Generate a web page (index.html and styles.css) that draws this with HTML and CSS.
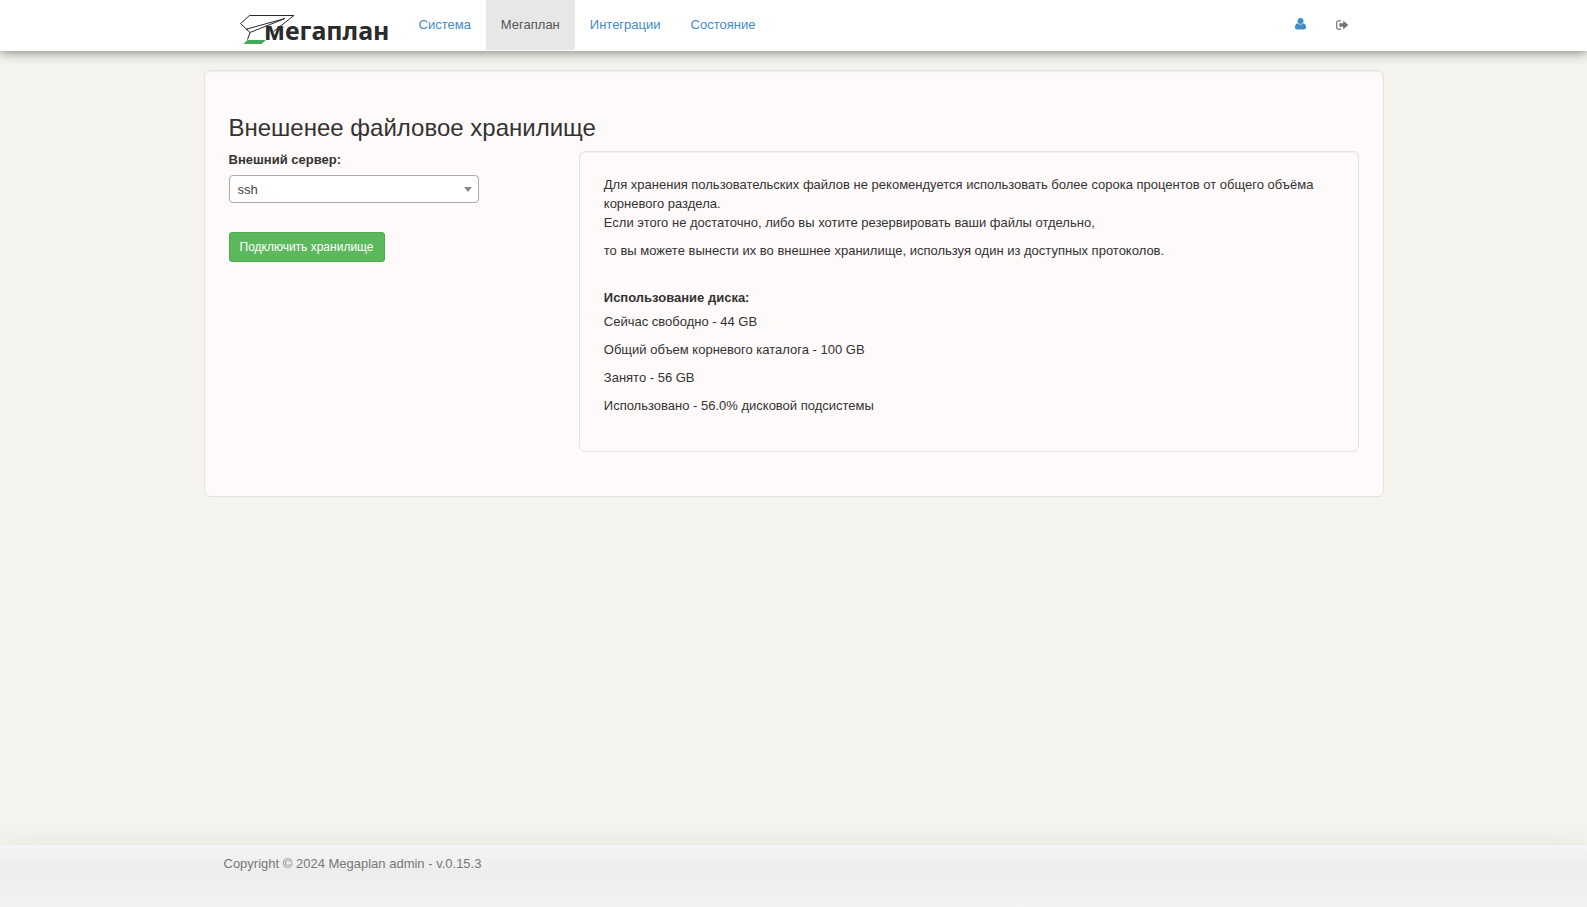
FILE: index.html
```html
<!DOCTYPE html>
<html lang="ru">
<head>
<meta charset="utf-8">
<title>Мегаплан</title>
<link rel="stylesheet" href="styles.css">
</head>
<body>
<header class="navbar">
  <div class="container navbar-inner">
    <a class="brand" href="#" aria-label="Мегаплан">
      <svg class="brand-logo" width="152" height="34" viewBox="0 0 152 34">
        <path d="M8.500 28H27l-4.500 4H4.500z" fill="#3faa58"/>
        <path d="M10.500 3.500H55L34.500 19.500M10.500 3.500L1.500 11.500 11 20.500 8.500 27.500M8 17L46 6.500M11 20.500L46 6.500M8 16.500v2" fill="none" stroke="#2b2b2b"/>
        <path d="M10.500 3.500H55" stroke="#2b2b2b"/>
        <text class="brand-text" x="25" y="28">мегаплан</text>
      </svg>
    </a>
    <nav class="menu">
      <a class="menu-link" href="#">Система</a>
      <a class="menu-link active" href="#">Мегаплан</a>
      <a class="menu-link" href="#">Интеграции</a>
      <a class="menu-link" href="#">Состояние</a>
    </nav>
    <div class="tools">
      <a class="tool user" href="#" aria-label="Профиль">
        <svg width="11" height="12" viewBox="0 0 11 12"><circle cx="5.500" cy="3" r="3"/><path d="M2.500 5.200C.7 5.500 0 7.300 0 9.300 0 10.800.8 11.500 2 11.500h7c1.200 0 2-.7 2-2.200 0-2-.7-3.800-2.500-4.100-1.700 1.600-4.300 1.600-6 0z"/></svg>
      </a>
      <a class="tool" href="#" aria-label="Выход">
        <svg width="13" height="10" viewBox="0 0 13 10"><path d="M5 .9H2.500C1.300.9.700 1.500.700 2.500v5c0 1 .6 1.600 1.800 1.600H5" fill="none" stroke="#777" stroke-width="1.200"/><path d="M3.300 3.200h3.900V.4L12.300 5 7.200 9.600V6.800H3.300z"/></svg>
      </a>
    </div>
  </div>
</header>
<main class="container page">
  <section class="well">
    <h3 class="title">Внешенее файловое хранилище</h3>
    <div class="columns">
      <form class="form">
        <label class="label" for="server">Внешний сервер:</label>
        <div class="select-wrap">
          <select class="select" id="server"><option>ssh</option></select>
        </div>
        <button class="button" type="button">Подключить хранилище</button>
      </form>
      <div class="well info">
        <p>Для хранения пользовательских файлов не рекомендуется использовать более сорока процентов от общего объёма корневого раздела.<br>Если этого не достаточно, либо вы хотите резервировать ваши файлы отдельно,</p>
        <p>то вы можете вынести их во внешнее хранилище, используя один из доступных протоколов.</p>
        <h4 class="subtitle">Использование диска:</h4>
        <p>Сейчас свободно - 44 GB</p>
        <p>Общий объем корневого каталога - 100 GB</p>
        <p>Занято - 56 GB</p>
        <p>Использовано - 56.0% дисковой подсистемы</p>
      </div>
    </div>
  </section>
</main>
<footer class="footer">
  <div class="container footer-inner">Copyright © 2024 Megaplan admin - v.0.15.3</div>
</footer>
</body>
</html>
```
FILE: styles.css
```css
* { box-sizing: border-box; }

body {
  margin: 0;
  min-height: 100vh;
  display: flex;
  flex-direction: column;
  background: #f5f4ef;
  color: #333;
  font: 13px/19px "Liberation Sans", Arial, sans-serif;
}

a { color: #428bca; text-decoration: none; }

.container {
  width: 100%;
  max-width: 1180px;
  margin: 0 auto;
}

.navbar {
  background: #fff;
  border-bottom: 1px solid #fff;
  box-shadow: 0 0 12px #66665f;
}

.navbar-inner {
  display: flex;
  padding: 0 20px 0 35px;
}

.brand { padding-top: 12px; width: 165px; }
.brand-logo { display: block; }

.brand-text {
  font: 700 25px "Noto Sans", sans-serif;
  fill: #2b2b2b;
}

.menu { display: flex; }
.menu-link { padding: 15px 15px 16px; }
.menu-link.active { background: #e7e7e7; color: #555; }

.tools { display: flex; margin-left: auto; }
.tool { display: flex; align-items: center; padding: 0 15px; fill: #777; }
.tool.user { fill: #428bca; padding-bottom: 3px; }

.page { padding: 19px 0; flex: 1; }

.well {
  padding: 24px;
  background: #fefaf9;
  border: 1px solid #e3e3e3;
  border-radius: 6px;
  box-shadow: inset 0 1px 1px rgba(0, 0, 0, .05);
}

.title {
  margin: 20px 0 10px;
  font-size: 24px;
  font-weight: 400;
  line-height: 26px;
}

.columns {
  display: grid;
  grid-template-columns: 31fr 69fr;
  align-items: start;
  margin-bottom: 20px;
}

.form { display: flex; flex-direction: column; align-items: flex-start; }
.label { margin-bottom: 6px; font-weight: 700; line-height: 18px; }

.select-wrap { position: relative; width: 250px; margin-bottom: 29px; }

.select-wrap::after {
  content: "";
  position: absolute;
  top: 12px;
  right: 7px;
  border: 4px solid transparent;
  border-top: 5px solid #888;
  border-bottom: 0;
  pointer-events: none;
}

.select {
  appearance: none;
  display: block;
  width: 100%;
  height: 28px;
  padding: 0 20px 0 8px;
  border: 1px solid #aaa;
  border-radius: 4px;
  background: #fff;
  color: #444;
  font: inherit;
}

.button {
  height: 30px;
  padding: 0 10px;
  border: 1px solid #4cae4c;
  border-radius: 3px;
  background: #5cb85c;
  color: #fff;
  font: 12px/18px "Liberation Sans", Arial, sans-serif;
}

.info p { margin: 0 0 9px; }
.info .subtitle { margin: 28px 0 5px; font-size: 13px; line-height: 19px; }

.info { padding: 23px 24px 27px; }

.footer {
  min-height: 62px;
  background: linear-gradient(#f5f5f5, #ededed 40%, #f3f3f3);
  box-shadow: 0 0 30px #e3e2de;
  color: #777;
}

.footer-inner { padding: 9px 20px; }
```
